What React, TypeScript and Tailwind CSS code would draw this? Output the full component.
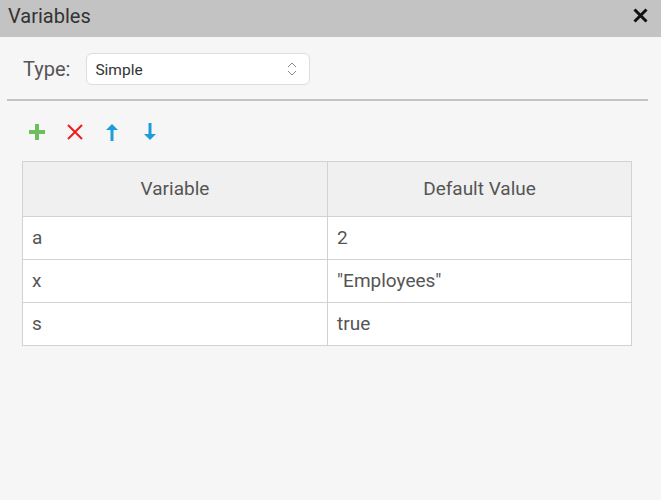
const rows = [
  { name: "a", value: "2" },
  { name: "x", value: '"Employees"' },
  { name: "s", value: "true" },
];

const PlusIcon = () => (
  <svg width="18" height="18" viewBox="0 0 18 18">
    <path d="M9 1v16M1 9h16" stroke="#6cbf5c" strokeWidth="4" />
  </svg>
);

const CrossIcon = () => (
  <svg width="18" height="18" viewBox="0 0 18 18">
    <path d="M2 2l14 14M16 2L2 16" stroke="#f21b1b" strokeWidth="2" />
  </svg>
);

const ArrowIcon = ({ down = false }: { down?: boolean }) => (
  <svg
    width="14"
    height="18"
    viewBox="0 0 14 18"
    className={down ? "rotate-180" : ""}
  >
    <path d="M7 5v13" stroke="#1a9dd9" strokeWidth="3" />
    <path d="M1 7L7 1l6 6z" fill="#1a9dd9" />
  </svg>
);

const App = () => {
  return (
    <div className="w-[661px] h-[500px] bg-[#f6f6f6] font-['Roboto',sans-serif] text-[#444] overflow-hidden">
      <div className="h-[37px] bg-[#c3c3c3] flex items-center justify-between pl-2 pr-[13px] pb-[6px]">
        <span className="text-[20px] text-[#333]">Variables</span>
        <svg width="15" height="15" viewBox="0 0 15 15">
          <path d="M1.5 1.5l12 12M13.5 1.5l-12 12" stroke="#111" strokeWidth="3" />
        </svg>
      </div>

      <div className="flex items-center gap-4 pl-[23px] pt-4 pb-[14px]">
        <span className="text-[20px] text-[#555]">Type:</span>
        <div className="w-[224px] h-[32px] bg-white border border-[#ddd] rounded-md flex items-center justify-between pl-2 pr-[12px]">
          <span className="text-[15.5px] text-[#333] pt-[3px]">Simple</span>
          <svg width="10" height="14" viewBox="0 0 10 14">
            <path d="M1 5l4-4 4 4M1 9l4 4 4-4" stroke="#888" strokeWidth="1" fill="none" />
          </svg>
        </div>
      </div>

      <div className="mx-[7px] w-[641px] h-[2px] bg-[#c4c4c4]" />

      <div className="flex items-center gap-5 pl-[28px] pt-[22px] pb-[20px]">
        <PlusIcon />
        <CrossIcon />
        <div className="flex gap-6 pl-[1px]">
          <ArrowIcon />
          <ArrowIcon down />
        </div>
      </div>

      <table className="ml-[22px] w-[610px] border-collapse text-[19px] text-[#555]">
        <thead>
          <tr className="h-[55px] bg-[#f0f0f0]">
            <th className="w-[305px] border border-[#d2d2d2] font-normal">Variable</th>
            <th className="border border-[#d2d2d2] font-normal">Default Value</th>
          </tr>
        </thead>
        <tbody className="bg-white">
          {rows.map((row) => (
            <tr key={row.name} className="h-[43px]">
              <td className="border border-[#d2d2d2] pl-[9px]">{row.name}</td>
              <td className="border border-[#d2d2d2] pl-[9px]">{row.value}</td>
            </tr>
          ))}
        </tbody>
      </table>
    </div>
  );
};

export default App;
